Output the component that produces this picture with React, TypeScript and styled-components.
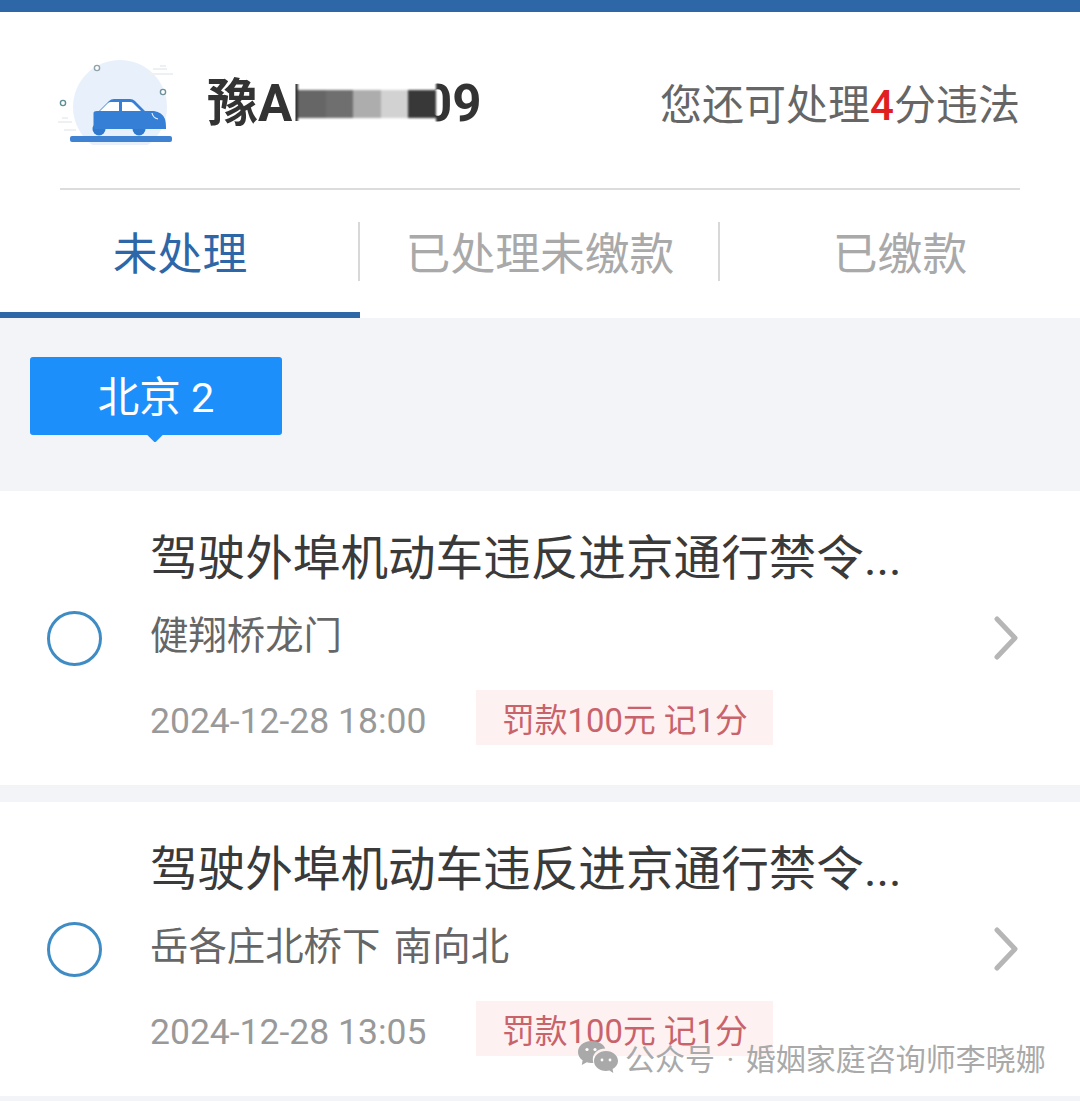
import React from "react"
import styled, { createGlobalStyle } from "styled-components"

const violations = [
  { place: "健翔桥龙门", time: "2024-12-28 18:00" },
  { place: "岳各庄北桥下 南向北", time: "2024-12-28 13:05" },
]

const mosaicShades = ["#666666", "#6f6f6f", "#adadad", "#d2d2d2", "#383838"]

function CarIcon() {
  return <CarSvg viewBox="53 58 124 86">
    <circle cx="120" cy="106" r="47" fill="#e8f1fb"/>
    <path d="M153 68h14M148 73h25M160 65h6M58 121h14M62 117h6M64 129h12" stroke="#eef1f4" strokeWidth="2" fill="none"/>
    <circle cx="97" cy="67" r="2.600" fill="#fff" stroke="#8fa3ab" strokeWidth="1.400"/>
    <circle cx="163" cy="91" r="2.600" fill="#fff" stroke="#6f929c" strokeWidth="1.400"/>
    <circle cx="63" cy="102" r="2.600" fill="#fff" stroke="#5f8f96" strokeWidth="1.400"/>
    <circle cx="99" cy="128" r="6.500" fill="#2f78cc"/>
    <circle cx="139" cy="128" r="6.500" fill="#2f78cc"/>
    <path d="M88 110h11l10-10q2-2 5-2h16q3 0 5 2l10 10h9q8 1 11 8q1 3 1 10h-71q-1.500 0-1.500-2v-14q0-2 3.500-2z" fill="#367fd6"/>
    <path d="M100 110l8-8q1-1 3-1h8v9zM122 101h8q2 0 3 1l8 8h-19z" fill="#fff"/>
    <path d="M152 112q1 5 6 6" stroke="#e8f1fb" strokeWidth="1.200" fill="none"/>
    <rect x="70" y="135" width="102" height="6" rx="2" fill="#3f82d2"/>
  </CarSvg>
}

function WeChatIcon() {
  return <WeChatSvg viewBox="0 0 42 34">
    <path d="M14 1C6.500 1 1 6 1 12c0 3.400 1.800 6.300 4.600 8.300L4.800 25l5-2.700c1.300.4 2.700.6 4.200.6 1 0 1.600-.1 2.400-.2-.4-1.200-.6-2.300-.6-3.500 0-6.300 5.700-10.800 12.400-10.800C26.600 3.800 20.800 1 14 1z" fill="#a9a9a9"/>
    <path d="M29 11c-6.800 0-12 4.500-12 10s5.200 10 12 10c1.200 0 2.300-.2 3.400-.5l3.900 2.500-.7-3.900c3.300-1.900 5.400-4.800 5.400-8.100 0-5.500-5.200-10-12-10z" fill="#a9a9a9"/>
    <circle cx="10" cy="9.500" r="1.600" fill="#fff"/>
    <circle cx="18" cy="9.500" r="1.600" fill="#fff"/>
    <circle cx="25" cy="20" r="1.400" fill="#fff"/>
    <circle cx="33" cy="20" r="1.400" fill="#fff"/>
  </WeChatSvg>
}

export default function App() {
  return <Page>
    <GlobalStyle/>
    <TopBar/>
    <TopPanel>
      <Header>
        <CarIcon/>
        <Plate>
          豫AM
          <Mosaic>
            {mosaicShades.map((shade, i) => <MosaicCell key={i} $shade={shade}/>)}
          </Mosaic>
          <PlateEnd>09</PlateEnd>
        </Plate>
        <Quota>您还可处理<QuotaNumber>4</QuotaNumber>分违法</Quota>
      </Header>
      <Tabs>
        <Tab $active>未处理</Tab>
        <Tab>已处理未缴款</Tab>
        <Tab>已缴款</Tab>
      </Tabs>
    </TopPanel>
    <CityBand>
      <CityBadge>北京 2</CityBadge>
    </CityBand>
    {violations.map(item => <Card key={item.time}>
      <Radio/>
      <CardBody>
        <Title>驾驶外埠机动车违反进京通行禁令...</Title>
        <Place>{item.place}</Place>
        <Meta>
          <Time>{item.time}</Time>
          <Penalty>罚款100元 记1分</Penalty>
        </Meta>
      </CardBody>
      <Chevron viewBox="0 0 26 44">
        <path d="M4 3l18 19L4 41" fill="none" stroke="#b6b6b6" strokeWidth="5" strokeLinecap="round" strokeLinejoin="round"/>
      </Chevron>
    </Card>)}
    <Watermark>
      <WeChatIcon/>
      公众号 · 婚姻家庭咨询师李晓娜
    </Watermark>
  </Page>
}

const GlobalStyle = createGlobalStyle`
  body {
    margin: 0;
    background: #f3f4f8;
    font-family: Roboto, "Noto Sans CJK SC", sans-serif;
  }
`;

const Page = styled.div`
  position: relative;
  width: 1080px;
  height: 1101px;
  overflow: hidden;
  background: #f3f4f8;
`;

const TopBar = styled.div`
  height: 12px;
  background: #2d67a8;
`;

const TopPanel = styled.div`
  background: #fff;
`;

const Header = styled.header`
  display: flex;
  align-items: center;
  height: 178px;
  box-sizing: border-box;
  margin: 0 60px;
  padding-top: 2px;
  border-bottom: 2px solid #dcdcdc;
`;

const CarSvg = styled.svg`
  flex: 0 0 auto;
  width: 124px;
  height: 86px;
  margin-left: -7px;
  margin-top: 2px;
`;

const Plate = styled.div`
  display: flex;
  align-items: center;
  margin-left: 30px;
  padding-top: 6px;
  font-size: 51px;
  font-weight: 700;
  color: #333;
  line-height: 60px;
`;

// white backing hides the covered digits above and below the blocks
const Mosaic = styled.div`
  position: relative;
  z-index: 1;
  display: flex;
  width: 138px;
  height: 46px;
  padding: 9px 0;
  box-sizing: border-box;
  margin-left: -39px;
  background: #fff;
  filter: blur(1px);
`;

const MosaicCell = styled.div<{ $shade: string }>`
  flex: 1;
  background: ${p => p.$shade};
`;

const PlateEnd = styled.span`
  margin-left: -13px;
`;

const Quota = styled.div`
  margin-left: auto;
  font-size: 42px;
  color: #666;
`;

const QuotaNumber = styled.span`
  color: #e02020;
  font-weight: 500;
`;

const Tabs = styled.nav`
  display: flex;
  height: 128px;
`;

const Tab = styled.div<{ $active?: boolean }>`
  position: relative;
  flex: 1;
  display: flex;
  align-items: center;
  justify-content: center;
  box-sizing: border-box;
  padding-bottom: 2px;
  font-size: 44.800px;
  color: ${p => p.$active ? "#2d67a8" : "#a9a9a9"};
  border-bottom: 6px solid ${p => p.$active ? "#2d67a8" : "transparent"};

  &:not(:last-child)::after {
    content: "";
    position: absolute;
    right: 0;
    top: 32px;
    width: 2px;
    height: 59px;
    background: #d8d8d8;
  }
`;

const CityBand = styled.div`
  height: 173px;
  padding: 39px 30px 0;
  box-sizing: border-box;
`;

const CityBadge = styled.div`
  position: relative;
  display: flex;
  align-items: center;
  justify-content: center;
  width: 252px;
  height: 78px;
  padding-bottom: 4px;
  box-sizing: border-box;
  border-radius: 3px;
  background: #1c8ffb;
  color: #fff;
  font-size: 41.500px;

  &::after {
    content: "";
    position: absolute;
    left: 117px;
    bottom: -6px;
    width: 16px;
    height: 16px;
    border-radius: 2px;
    background: #1c8ffb;
    transform: rotate(45deg) scale(0.85);
  }
`;

const Card = styled.section`
  display: flex;
  align-items: center;
  height: 294px;
  box-sizing: border-box;
  background: #fff;
  margin-bottom: 17px;
  padding: 0 61px 0 47px;
`;

const Radio = styled.div`
  flex: 0 0 auto;
  width: 55px;
  height: 55px;
  box-sizing: border-box;
  border: 3px solid #3f8cc4;
  border-radius: 50%;
`;

const CardBody = styled.div`
  flex: 1;
  align-self: flex-start;
  margin-left: 48px;
  padding-top: 38px;
`;

const Title = styled.div`
  font-size: 47.600px;
  line-height: 60px;
  color: #3a3a3a;
  white-space: nowrap;
`;

const Place = styled.div`
  margin-top: 22px;
  font-size: 38.400px;
  line-height: 50px;
  word-spacing: 4px;
  color: #666;
`;

const Meta = styled.div`
  display: flex;
  align-items: center;
  margin-top: 29px;
`;

const Time = styled.span`
  width: 326px;
  padding-top: 7px;
  font-size: 35.500px;
  color: #999;
`;

const Penalty = styled.span`
  display: flex;
  align-items: center;
  height: 55px;
  padding: 0 25px 0 26px;
  font-size: 32.800px;
  color: #c9636b;
  background: #fef1f1;
`;

const Chevron = styled.svg`
  flex: 0 0 auto;
  width: 26px;
  height: 44px;
`;

const Watermark = styled.div`
  position: absolute;
  left: 577px;
  top: 1039px;
  display: flex;
  align-items: center;
  height: 36px;
  font-size: 30px;
  word-spacing: 4px;
  color: #a9a9a9;
  white-space: nowrap;
`;

const WeChatSvg = styled.svg`
  width: 42px;
  height: 34px;
  margin-right: 6px;
`;
